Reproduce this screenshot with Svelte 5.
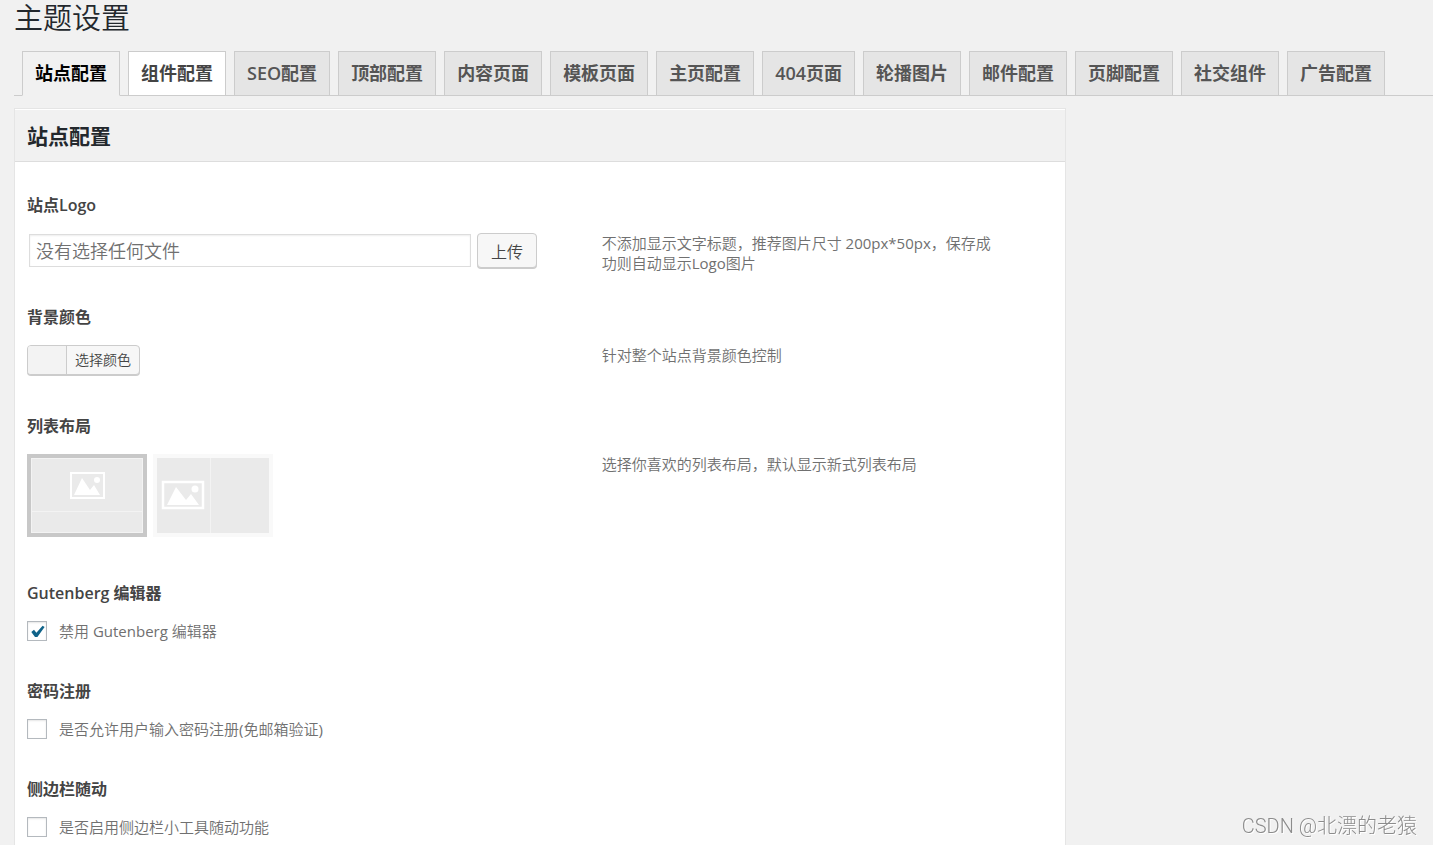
<script lang="ts">
    interface Tab {
        id: string
        label: string
    }

    const tabs: Tab[] = [
        { id: 'site', label: '站点配置' },
        { id: 'widgets', label: '组件配置' },
        { id: 'seo', label: 'SEO配置' },
        { id: 'top', label: '顶部配置' },
        { id: 'content', label: '内容页面' },
        { id: 'template', label: '模板页面' },
        { id: 'home', label: '主页配置' },
        { id: 'notfound', label: '404页面' },
        { id: 'slider', label: '轮播图片' },
        { id: 'mail', label: '邮件配置' },
        { id: 'footer', label: '页脚配置' },
        { id: 'social', label: '社交组件' },
        { id: 'ads', label: '广告配置' },
    ]

    let active = $state('site')
    let logo = $state('')
    let layout = $state('card')

    const switches = $state([
        { id: 'gutenberg', title: 'Gutenberg 编辑器', text: '禁用 Gutenberg 编辑器', checked: true },
        { id: 'password', title: '密码注册', text: '是否允许用户输入密码注册(免邮箱验证)', checked: false },
        { id: 'sticky', title: '侧边栏随动', text: '是否启用侧边栏小工具随动功能', checked: false },
    ])
</script>

<div class="wrap">
    <h1>主题设置</h1>

    <nav class="tabs">
        {#each tabs as tab (tab.id)}
            <a
                href="#{tab.id}"
                class="tab"
                class:active={active === tab.id}
                class:focused={tab.id === 'widgets'}
                onclick={() => {
                    active = tab.id
                }}>{tab.label}</a
            >
        {/each}
    </nav>

    <main class="panel">
        <h2>站点配置</h2>

        <form class="fields">
            <section class="field">
                <h3><label for="logo">站点Logo</label></h3>
                <div class="control upload">
                    <input id="logo" type="text" placeholder="没有选择任何文件" bind:value={logo} />
                    <button type="button" class="button">上传</button>
                </div>
                <p>不添加显示文字标题，推荐图片尺寸 200px*50px，保存成功则自动显示Logo图片</p>
            </section>

            <section class="field">
                <h3>背景颜色</h3>
                <div class="control color">
                    <button type="button" class="button picker">
                        <span class="swatch"></span>
                        <span class="picker-text">选择颜色</span>
                    </button>
                </div>
                <p>针对整个站点背景颜色控制</p>
            </section>

            <section class="field">
                <h3>列表布局</h3>
                <div class="control layouts">
                    <label class="layout">
                        <input type="radio" name="layout" value="card" aria-label="新式列表布局" bind:group={layout} />
                        <svg width="112" height="75" viewBox="0 0 112 75">
                            <rect width="112" height="75" fill="#eaeaea" />
                            <path d="M0 53.5h112M.5 0v75M111.5 0v75M0 .5h112M0 74.5h112" stroke="#f3f3f3" />
                            <rect x="40" y="15" width="33" height="25" fill="none" stroke="#fff" stroke-width="2" />
                            <path d="M43 37l8-17 8 12 4-5 6 10z" fill="#fff" />
                            <circle cx="66" cy="22" r="3" fill="#fff" />
                        </svg>
                    </label>
                    <label class="layout">
                        <input type="radio" name="layout" value="list" aria-label="经典列表布局" bind:group={layout} />
                        <svg width="112" height="75" viewBox="0 0 112 75">
                            <rect width="112" height="75" fill="#eaeaea" />
                            <path d="M53.5 0v75" stroke="#f3f3f3" />
                            <rect x="6" y="24" width="40" height="26" fill="none" stroke="#fff" stroke-width="2.5" />
                            <path d="M10 47l9-18 10 13 5-6 8 11z" fill="#fff" />
                            <circle cx="38" cy="31" r="3.5" fill="#fff" />
                        </svg>
                    </label>
                </div>
                <p>选择你喜欢的列表布局，默认显示新式列表布局</p>
            </section>

            {#each switches as item (item.id)}
                <section class="field">
                    <h3>{item.title}</h3>
                    <div class="control">
                        <label class="check">
                            <input type="checkbox" bind:checked={item.checked} />
                            <svg class="tick" width="20" height="20" viewBox="0 0 20 20">
                                <path d="M4.3 11L7 8.8l2.4 2.9L15.6 4.8l2 1.2L10.4 16H8z" fill="#0f6389" />
                            </svg>
                            <span>{item.text}</span>
                        </label>
                    </div>
                </section>
            {/each}
        </form>
    </main>

    <div class="watermark">CSDN @北漂的老猿</div>
</div>

<style>
    :global(body) {
        background: #f1f1f1;
        overflow: hidden;
    }

    .wrap {
        padding-left: 14px;
        font-family: 'Open Sans', 'Noto Sans CJK SC DemiLight', 'Noto Sans CJK SC', sans-serif;
        font-size: 15px;
        line-height: 20px;
        color: #444;
    }

    h1,
    h2,
    h3,
    p {
        margin: 0;
    }

    h1 {
        padding-bottom: 15px;
        font-size: 29px;
        font-weight: 350;
        line-height: 36px;
        color: #23282d;
    }

    .tabs {
        display: flex;
        gap: 8px;
        padding-left: 8px;
        border-bottom: 1px solid #ccc;
    }

    .tab {
        padding: 8px 12px;
        margin-bottom: -1px;
        border: 1px solid #ccc;
        background: #e5e5e5;
        color: #555;
        font-family: 'Open Sans', 'Noto Sans CJK SC', sans-serif;
        font-size: 18px;
        font-weight: 600;
        line-height: 27px;
        text-decoration: none;
        white-space: nowrap;
    }

    .tab.focused {
        background: #fff;
        color: #444;
    }

    .tab.active {
        border-bottom-color: #f1f1f1;
        background: #f1f1f1;
        color: #000;
    }

    .panel {
        box-sizing: border-box;
        width: calc(75% - 12px);
        margin-top: 12px;
        border: 1px solid #e5e5e5;
        background: #fff;
    }

    h2 {
        margin-top: 1px;
        padding: 13px 12px 11px;
        border-bottom: 1px solid #ddd;
        background: #f1f1f1;
        font-family: 'Open Sans', 'Noto Sans CJK SC', sans-serif;
        font-size: 21px;
        font-weight: 700;
        line-height: 27px;
        color: #23282d;
    }

    .fields {
        padding: 33px 12px 0;
    }

    .field {
        display: grid;
        grid-template-columns: 50% 38%;
        column-gap: 6%;
        align-items: start;
        padding-bottom: 34px;
    }

    h3 {
        grid-column: 1 / -1;
        margin-bottom: 18px;
        font-family: 'Open Sans', 'Noto Sans CJK SC', sans-serif;
        font-size: 16px;
        font-weight: 600;
        line-height: 20px;
    }

    p {
        color: #707070;
    }

    .control {
        min-height: 26px;
    }

    .upload {
        display: flex;
        align-items: center;
        gap: 6px;
        padding: 0 3px 0 2px;
    }

    .upload input {
        flex: 1;
        box-sizing: border-box;
        min-width: 0;
        height: 33px;
        padding: 0 6px;
        border: 1px solid #ddd;
        box-shadow: inset 0 1px 2px rgba(0, 0, 0, 0.07);
        color: #32373c;
        font-family: inherit;
        font-size: 18px;
    }

    .upload input::placeholder {
        color: #707070;
    }

    .button {
        box-sizing: border-box;
        border: 1px solid #ccc;
        border-radius: 4px;
        background: #f7f7f7;
        box-shadow: 0 1px 0 #ccc;
        color: #444;
        font-family: inherit;
        cursor: pointer;
    }

    .upload .button {
        height: 35px;
        padding: 0 13px;
        font-size: 16px;
    }

    .color {
        min-height: 37px;
    }

    .picker {
        display: flex;
        height: 30px;
        padding: 0;
        overflow: hidden;
        font-size: 14px;
        line-height: 28px;
    }

    .swatch {
        width: 38px;
        height: 28px;
        border-right: 1px solid #ccc;
        background: #f3f3f3;
    }

    .picker-text {
        padding: 0 8px;
    }

    .layouts {
        display: flex;
        gap: 6px;
        margin-bottom: 12px;
    }

    .layout {
        display: block;
        border: 4px solid #f9f9f9;
        cursor: pointer;
    }

    .layout:has(input:checked) {
        border-color: #c8c8c8;
    }

    .layout input {
        position: absolute;
        opacity: 0;
    }

    .layout svg {
        display: block;
    }

    .check {
        display: flex;
        position: relative;
        align-items: center;
        gap: 12px;
        width: fit-content;
        color: #707070;
        cursor: pointer;
    }

    .check input {
        box-sizing: border-box;
        width: 20px;
        height: 20px;
        margin: 0;
        border: 1px solid #b4b9be;
        background: #fff;
        box-shadow: inset 0 1px 2px rgba(0, 0, 0, 0.1);
        appearance: none;
    }

    .tick {
        display: none;
        position: absolute;
        top: 0;
        left: 0;
    }

    input:checked + .tick {
        display: block;
    }

    .watermark {
        position: fixed;
        right: 16px;
        bottom: 6px;
        color: #8c8c8c;
        font-family: Roboto, 'Noto Sans CJK SC', sans-serif;
        font-size: 20px;
        font-weight: 300;
        line-height: 26px;
        text-shadow: 1px 1px 0 #fff;
    }
</style>
